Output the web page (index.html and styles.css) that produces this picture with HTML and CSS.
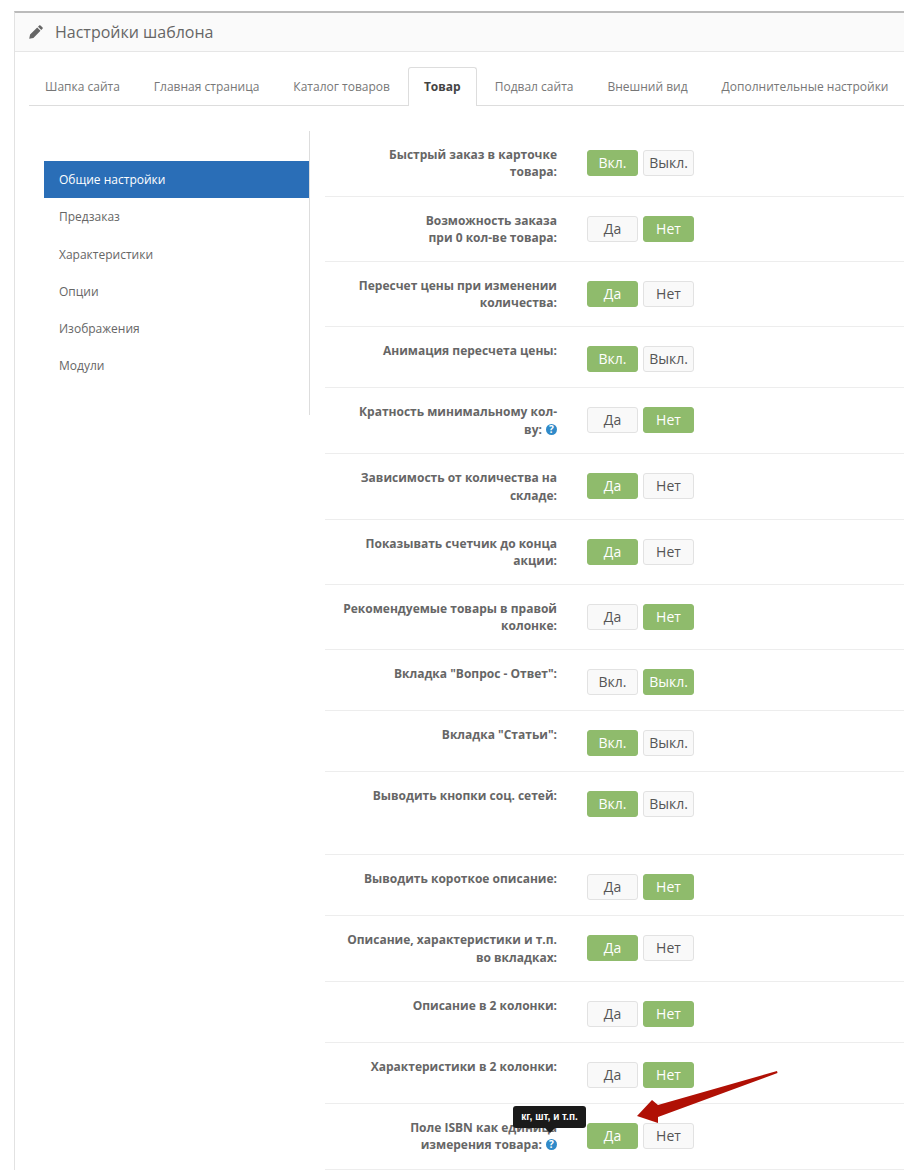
FILE: index.html
```html
<!DOCTYPE html>
<html lang="ru">
<head>
    <meta charset="UTF-8">
    <meta name="viewport" content="width=device-width, initial-scale=1.0">
    <title>Настройки шаблона</title>
    <link rel="stylesheet" href="styles.css">
</head>
<body>
    <div class="panel">
        <div class="panel-heading">
            <svg class="pencil" width="14" height="14" viewBox="0 0 14 14"><path d="M10.4 0.3 Q11 0 11.5 0.4 L13.6 2.5 Q14 3 13.7 3.6 L12.3 5 L9 1.7 Z M8.2 2.5 L11.5 5.8 L4.4 12.9 L0.2 13.8 L1.1 9.6 Z" fill="#666"/></svg>
            <span>Настройки шаблона</span>
        </div>
        <div class="panel-body">
            <ul class="tabs">
                <li>Шапка сайта</li>
                <li>Главная страница</li>
                <li>Каталог товаров</li>
                <li class="active">Товар</li>
                <li>Подвал сайта</li>
                <li>Внешний вид</li>
                <li>Дополнительные настройки</li>
            </ul>
            <div class="content">
                <ul class="side-menu">
                    <li class="active">Общие настройки</li>
                    <li>Предзаказ</li>
                    <li>Характеристики</li>
                    <li>Опции</li>
                    <li>Изображения</li>
                    <li>Модули</li>
                </ul>
                <div class="settings">
                    <div class="row">
                        <label>Быстрый заказ в карточке<br>товара:</label>
                        <div class="toggle"><span class="btn on">Вкл.</span><span class="btn">Выкл.</span></div>
                    </div>
                    <div class="row">
                        <label>Возможность заказа<br>при 0 кол-ве товара:</label>
                        <div class="toggle"><span class="btn">Да</span><span class="btn on">Нет</span></div>
                    </div>
                    <div class="row">
                        <label>Пересчет цены при изменении<br>количества:</label>
                        <div class="toggle"><span class="btn on">Да</span><span class="btn">Нет</span></div>
                    </div>
                    <div class="row">
                        <label>Анимация пересчета цены:</label>
                        <div class="toggle"><span class="btn on">Вкл.</span><span class="btn">Выкл.</span></div>
                    </div>
                    <div class="row row-help">
                        <label>Кратность минимальному кол-<br>ву: <span class="help">?</span></label>
                        <div class="toggle"><span class="btn">Да</span><span class="btn on">Нет</span></div>
                    </div>
                    <div class="row">
                        <label>Зависимость от количества на<br>складе:</label>
                        <div class="toggle"><span class="btn on">Да</span><span class="btn">Нет</span></div>
                    </div>
                    <div class="row">
                        <label>Показывать счетчик до конца<br>акции:</label>
                        <div class="toggle"><span class="btn on">Да</span><span class="btn">Нет</span></div>
                    </div>
                    <div class="row">
                        <label>Рекомендуемые товары в правой<br>колонке:</label>
                        <div class="toggle"><span class="btn">Да</span><span class="btn on">Нет</span></div>
                    </div>
                    <div class="row">
                        <label>Вкладка "Вопрос - Ответ":</label>
                        <div class="toggle"><span class="btn">Вкл.</span><span class="btn on">Выкл.</span></div>
                    </div>
                    <div class="row">
                        <label>Вкладка "Статьи":</label>
                        <div class="toggle"><span class="btn on">Вкл.</span><span class="btn">Выкл.</span></div>
                    </div>
                    <div class="row row-tall">
                        <label>Выводить кнопки соц. сетей:</label>
                        <div class="toggle"><span class="btn on">Вкл.</span><span class="btn">Выкл.</span></div>
                    </div>
                    <div class="row">
                        <label>Выводить короткое описание:</label>
                        <div class="toggle"><span class="btn">Да</span><span class="btn on">Нет</span></div>
                    </div>
                    <div class="row">
                        <label>Описание, характеристики и т.п.<br>во вкладках:</label>
                        <div class="toggle"><span class="btn on">Да</span><span class="btn">Нет</span></div>
                    </div>
                    <div class="row">
                        <label>Описание в 2 колонки:</label>
                        <div class="toggle"><span class="btn">Да</span><span class="btn on">Нет</span></div>
                    </div>
                    <div class="row">
                        <label>Характеристики в 2 колонки:</label>
                        <div class="toggle"><span class="btn">Да</span><span class="btn on">Нет</span></div>
                    </div>
                    <div class="row row-help">
                        <label>Поле ISBN как единица<br>измерения товара: <span class="help">?</span></label>
                        <div class="toggle"><span class="btn on">Да</span><span class="btn">Нет</span></div>
                    </div>
                </div>
            </div>
        </div>
    </div>

    <div class="tooltip">кг, шт, и т.п.</div>
    <svg class="arrow" width="150" height="60" viewBox="0 0 150 60"><path d="M1 51 L16 35 L22 40 L141 6 L141.5 8 L22 52 L22 58 Z" fill="#b01005"/></svg>
</body>
</html>
```

FILE: styles.css
```css
html, body {
    margin: 0;
    padding: 0;
}
body {
    font-family: "Open Sans", "Noto Sans", sans-serif;
    background-color: #ffffff;
    color: #666666;
    position: relative;
    height: 1170px;
    overflow: hidden;
}
ul {
    list-style: none;
    margin: 0;
    padding: 0;
}
.panel {
    margin: 11px 0 0 14px;
    border-top: 2px solid #bbbbbb;
    border-left: 1px solid #e2e2e2;
}
.panel-heading {
    display: flex;
    align-items: center;
    gap: 12px;
    height: 37px;
    padding: 0 0 1px 14px;
    background-color: #fafafa;
    border-bottom: 1px solid #e6e6e6;
    font-size: 16px;
    color: #666666;
}
.panel-body {
    padding: 15px 0 0 14px;
}
.tabs {
    display: flex;
    height: 38px;
    border-bottom: 1px solid #dddddd;
    font-size: 12px;
    color: #777777;
}
.tabs li {
    padding: 0 15px;
    margin-right: 2px;
    border: 1px solid transparent;
    border-bottom: 0;
    line-height: 38px;
    white-space: nowrap;
}
.tabs li.active {
    height: 38px;
    background-color: #ffffff;
    border-color: #dddddd;
    border-radius: 3px 3px 0 0;
    color: #444444;
    font-weight: 700;
}
.content {
    display: flex;
    margin-top: 25px;
}
.side-menu {
    flex: none;
    width: 265px;
    height: 254px;
    margin-left: 15px;
    padding-top: 30px;
    border-right: 1px solid #dddddd;
    font-size: 12px;
    color: #666666;
}
.side-menu li {
    height: 37.3px;
    padding-left: 15px;
    line-height: 37px;
}
.side-menu li.active {
    background-color: #2a6eb7;
    color: #ffffff;
}
.settings {
    flex: 1;
    margin-left: 15px;
}
.row {
    display: flex;
    padding: 15px 0;
    border-bottom: 1px solid #ededed;
}
.row:first-child {
    padding-bottom: 15.65px;
}
.row-help {
    padding-bottom: 15.75px;
}
.row-tall {
    padding-bottom: 37px;
}
.row label {
    flex: none;
    width: 232px;
    min-height: 30.05px;
    text-align: right;
    font-size: 12px;
    font-weight: 700;
    line-height: 17.125px;
    color: #666666;
}
.help {
    display: inline-block;
    width: 11px;
    height: 11px;
    border-radius: 50%;
    background-color: #2f8ac9;
    color: #ffffff;
    font-size: 10px;
    font-weight: 700;
    line-height: 11px;
    text-align: center;
    vertical-align: 1px;
    margin-left: 1px;
}
.toggle {
    display: flex;
    gap: 5px;
    height: 26px;
    margin: 4px 0 0 30px;
}
.btn {
    box-sizing: border-box;
    width: 51px;
    height: 26px;
    border: 1px solid #e2e2e2;
    border-radius: 3px;
    background-color: #f9f9f9;
    color: #555555;
    font-size: 14px;
    line-height: 24px;
    text-align: center;
}
.btn.on {
    background-color: #8fbb6c;
    border-color: #8fbb6c;
    color: #ffffff;
}
.tooltip {
    position: absolute;
    left: 513px;
    top: 1106px;
    width: 73px;
    height: 22px;
    border-radius: 3px;
    background-color: #1a1a1a;
    color: #ffffff;
    font-family: "Liberation Sans", sans-serif;
    font-size: 10px;
    font-weight: 700;
    line-height: 22px;
    text-align: center;
}
.tooltip::after {
    content: "";
    position: absolute;
    left: 32px;
    top: 22px;
    border: 5px solid transparent;
    border-top-color: #1a1a1a;
    border-bottom: 0;
}
.arrow {
    position: absolute;
    left: 636px;
    top: 1065px;
}
```
